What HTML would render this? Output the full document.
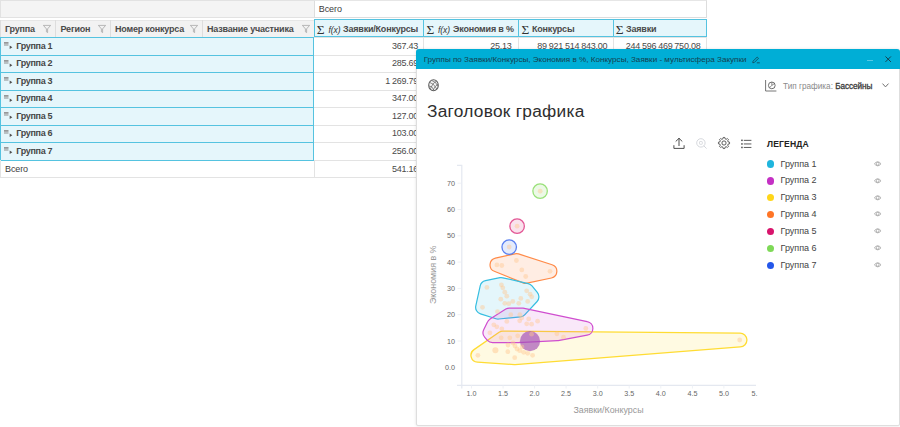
<!DOCTYPE html>
<html lang="ru"><head><meta charset="utf-8"><title>Группы</title>
<style>
*{box-sizing:border-box;margin:0;padding:0}
html,body{width:900px;height:427px;overflow:hidden;background:#fff}
body{position:relative;font-family:"Liberation Sans","DejaVu Sans",sans-serif;font-size:9px;color:#333}
.abs{position:absolute}
.t{position:absolute;white-space:nowrap;line-height:1}
.hb{font-weight:bold;color:#4a4a4a;letter-spacing:-0.2px}
.num{position:absolute;text-align:right;white-space:nowrap;line-height:1;color:#4a4a4a;letter-spacing:-0.25px;word-spacing:-0.3px}
svg{position:absolute;overflow:visible}
</style></head><body>

<div class="abs" style="left:0;top:0;width:314px;height:17.6px;background:#f4f4f4;border:1px solid #e2e2e2;border-right:none"></div>
<div class="abs" style="left:314px;top:0;width:393px;height:17.6px;background:#fff;border:1px solid #dddddd;border-top-color:#e6e6e6"></div>
<div class="t" style="left:318.8px;top:4.8px;color:#3c3c3c;letter-spacing:-0.12px">Всего</div>
<div class="abs" style="left:0;top:19.7px;width:314px;height:17.8px;background:#f2f2f2;border-top:1px solid #e6e6e6"></div>
<div class="abs" style="left:0px;top:20px;width:1px;height:17px;background:#dddddd"></div>
<div class="abs" style="left:55px;top:20px;width:1px;height:17px;background:#dddddd"></div>
<div class="abs" style="left:109.5px;top:20px;width:1px;height:17px;background:#dddddd"></div>
<div class="abs" style="left:202px;top:20px;width:1px;height:17px;background:#dddddd"></div>
<div class="t hb" style="left:5px;top:24.6px">Группа</div>
<svg style="left:43px;top:24.7px" width="8" height="8" viewBox="0 0 8 8"><path d="M0.4 0.4 H7.6 L4.6 3.9 V7.6 L3.4 6.8 V3.9 Z" fill="none" stroke="#a2a2a2" stroke-width="0.75" stroke-linejoin="round"/></svg>
<div class="t hb" style="left:60.5px;top:24.6px">Регион</div>
<svg style="left:97.5px;top:24.7px" width="8" height="8" viewBox="0 0 8 8"><path d="M0.4 0.4 H7.6 L4.6 3.9 V7.6 L3.4 6.8 V3.9 Z" fill="none" stroke="#a2a2a2" stroke-width="0.75" stroke-linejoin="round"/></svg>
<div class="t hb" style="left:115px;top:24.6px">Номер конкурса</div>
<svg style="left:190px;top:24.7px" width="8" height="8" viewBox="0 0 8 8"><path d="M0.4 0.4 H7.6 L4.6 3.9 V7.6 L3.4 6.8 V3.9 Z" fill="none" stroke="#a2a2a2" stroke-width="0.75" stroke-linejoin="round"/></svg>
<div class="t hb" style="left:207px;top:24.6px">Название участника</div>
<svg style="left:301.5px;top:24.7px" width="8" height="8" viewBox="0 0 8 8"><path d="M0.4 0.4 H7.6 L4.6 3.9 V7.6 L3.4 6.8 V3.9 Z" fill="none" stroke="#a2a2a2" stroke-width="0.75" stroke-linejoin="round"/></svg>
<div class="abs" style="left:313.7px;top:18.9px;width:393.3px;height:18.6px;background:#e5f6fb;border:1px solid #55c3e0"></div>
<div class="abs" style="left:423px;top:18.9px;width:1px;height:18.6px;background:#55c3e0"></div>
<div class="abs" style="left:518px;top:18.9px;width:1px;height:18.6px;background:#55c3e0"></div>
<div class="abs" style="left:612.5px;top:18.9px;width:1px;height:18.6px;background:#55c3e0"></div>
<div class="t" style="left:316.8px;top:22.6px;font-family:'Liberation Serif',serif;font-size:13.4px;color:#333">Σ</div>
<div class="t" style="left:328.5px;top:26px;font-style:italic;font-size:8.5px;color:#333;letter-spacing:-0.1px">f(x)</div>
<div class="t hb" style="left:343px;top:24.6px">Заявки/Конкурсы</div>
<div class="t" style="left:426.5px;top:22.6px;font-family:'Liberation Serif',serif;font-size:13.4px;color:#333">Σ</div>
<div class="t" style="left:438px;top:26px;font-style:italic;font-size:8.5px;color:#333;letter-spacing:-0.1px">f(x)</div>
<div class="t hb" style="left:453px;top:24.6px">Экономия в %</div>
<div class="t" style="left:521.5px;top:22.6px;font-family:'Liberation Serif',serif;font-size:13.4px;color:#333">Σ</div>
<div class="t hb" style="left:532px;top:24.6px">Конкурсы</div>
<div class="t" style="left:615.8px;top:22.6px;font-family:'Liberation Serif',serif;font-size:13.4px;color:#333">Σ</div>
<div class="t hb" style="left:626px;top:24.6px">Заявки</div>
<div class="abs" style="left:314px;top:37.0px;width:393px;height:1px;background:#e3e3e3"></div>
<div class="abs" style="left:314px;top:54.5px;width:393px;height:1px;background:#e3e3e3"></div>
<div class="abs" style="left:314px;top:72.0px;width:393px;height:1px;background:#e3e3e3"></div>
<div class="abs" style="left:314px;top:89.5px;width:393px;height:1px;background:#e3e3e3"></div>
<div class="abs" style="left:314px;top:107.0px;width:393px;height:1px;background:#e3e3e3"></div>
<div class="abs" style="left:314px;top:124.5px;width:393px;height:1px;background:#e3e3e3"></div>
<div class="abs" style="left:314px;top:142.0px;width:393px;height:1px;background:#e3e3e3"></div>
<div class="abs" style="left:314px;top:159.5px;width:393px;height:1px;background:#e3e3e3"></div>
<div class="abs" style="left:314px;top:177.0px;width:393px;height:1px;background:#e3e3e3"></div>
<div class="abs" style="left:423px;top:37.5px;width:1px;height:140.0px;background:#e3e3e3"></div>
<div class="abs" style="left:518px;top:37.5px;width:1px;height:140.0px;background:#e3e3e3"></div>
<div class="abs" style="left:612.5px;top:37.5px;width:1px;height:140.0px;background:#e3e3e3"></div>
<div class="abs" style="left:706px;top:37.5px;width:1px;height:140.0px;background:#e3e3e3"></div>
<div class="abs" style="left:0;top:37.0px;width:314px;height:123.5px;background:#e5f6fb;border:1px solid #55c3e0;border-left-width:1.3px"></div>
<div class="abs" style="left:0;top:54.5px;width:314px;height:1px;background:#55c3e0"></div>
<div class="abs" style="left:0;top:72.0px;width:314px;height:1px;background:#55c3e0"></div>
<div class="abs" style="left:0;top:89.5px;width:314px;height:1px;background:#55c3e0"></div>
<div class="abs" style="left:0;top:107.0px;width:314px;height:1px;background:#55c3e0"></div>
<div class="abs" style="left:0;top:124.5px;width:314px;height:1px;background:#55c3e0"></div>
<div class="abs" style="left:0;top:142.0px;width:314px;height:1px;background:#55c3e0"></div>
<svg style="left:4.3px;top:42.3px" width="10" height="8" viewBox="0 0 10 8"><rect x="0" y="0" width="4.5" height="0.9" fill="#8e8e8e"/><rect x="0" y="1.3" width="4.5" height="0.9" fill="#8e8e8e"/><rect x="0" y="2.6" width="4.5" height="0.9" fill="#8e8e8e"/><path d="M5.7 3.5 L8.3 5.2 L5.7 6.9 Z" fill="#4e4e4e"/></svg>
<div class="t hb" style="left:16.3px;top:41.7px;letter-spacing:-0.33px;color:#464646">Группа 1</div>
<div class="num" style="right:482.1px;top:41.7px">367.43</div>
<div class="num" style="right:388.4px;top:41.7px">25.13</div>
<div class="num" style="right:292.79999999999995px;top:41.7px">89 921 514 843.00</div>
<div class="num" style="right:199.60000000000002px;top:41.7px">244 596 469 750.08</div>
<svg style="left:4.3px;top:59.8px" width="10" height="8" viewBox="0 0 10 8"><rect x="0" y="0" width="4.5" height="0.9" fill="#8e8e8e"/><rect x="0" y="1.3" width="4.5" height="0.9" fill="#8e8e8e"/><rect x="0" y="2.6" width="4.5" height="0.9" fill="#8e8e8e"/><path d="M5.7 3.5 L8.3 5.2 L5.7 6.9 Z" fill="#4e4e4e"/></svg>
<div class="t hb" style="left:16.3px;top:59.2px;letter-spacing:-0.33px;color:#464646">Группа 2</div>
<div class="num" style="right:482.1px;top:59.2px">285.69</div>
<div class="num" style="right:388.4px;top:59.2px">21.07</div>
<div class="num" style="right:292.79999999999995px;top:59.2px">64 210 338 120.45</div>
<div class="num" style="right:199.60000000000002px;top:59.2px">181 209 774 310.12</div>
<svg style="left:4.3px;top:77.3px" width="10" height="8" viewBox="0 0 10 8"><rect x="0" y="0" width="4.5" height="0.9" fill="#8e8e8e"/><rect x="0" y="1.3" width="4.5" height="0.9" fill="#8e8e8e"/><rect x="0" y="2.6" width="4.5" height="0.9" fill="#8e8e8e"/><path d="M5.7 3.5 L8.3 5.2 L5.7 6.9 Z" fill="#4e4e4e"/></svg>
<div class="t hb" style="left:16.3px;top:76.7px;letter-spacing:-0.33px;color:#464646">Группа 3</div>
<div class="num" style="right:482.1px;top:76.7px">1 269.79</div>
<div class="num" style="right:388.4px;top:76.7px">9.84</div>
<div class="num" style="right:292.79999999999995px;top:76.7px">310 442 905 611.30</div>
<div class="num" style="right:199.60000000000002px;top:76.7px">402 118 530 992.76</div>
<svg style="left:4.3px;top:94.8px" width="10" height="8" viewBox="0 0 10 8"><rect x="0" y="0" width="4.5" height="0.9" fill="#8e8e8e"/><rect x="0" y="1.3" width="4.5" height="0.9" fill="#8e8e8e"/><rect x="0" y="2.6" width="4.5" height="0.9" fill="#8e8e8e"/><path d="M5.7 3.5 L8.3 5.2 L5.7 6.9 Z" fill="#4e4e4e"/></svg>
<div class="t hb" style="left:16.3px;top:94.2px;letter-spacing:-0.33px;color:#464646">Группа 4</div>
<div class="num" style="right:482.1px;top:94.2px">347.00</div>
<div class="num" style="right:388.4px;top:94.2px">38.52</div>
<div class="num" style="right:292.79999999999995px;top:94.2px">72 008 116 450.00</div>
<div class="num" style="right:199.60000000000002px;top:94.2px">150 730 284 615.40</div>
<svg style="left:4.3px;top:112.3px" width="10" height="8" viewBox="0 0 10 8"><rect x="0" y="0" width="4.5" height="0.9" fill="#8e8e8e"/><rect x="0" y="1.3" width="4.5" height="0.9" fill="#8e8e8e"/><rect x="0" y="2.6" width="4.5" height="0.9" fill="#8e8e8e"/><path d="M5.7 3.5 L8.3 5.2 L5.7 6.9 Z" fill="#4e4e4e"/></svg>
<div class="t hb" style="left:16.3px;top:111.7px;letter-spacing:-0.33px;color:#464646">Группа 5</div>
<div class="num" style="right:482.1px;top:111.7px">127.00</div>
<div class="num" style="right:388.4px;top:111.7px">53.10</div>
<div class="num" style="right:292.79999999999995px;top:111.7px">12 450 300 000.00</div>
<div class="num" style="right:199.60000000000002px;top:111.7px">21 804 512 300.00</div>
<svg style="left:4.3px;top:129.8px" width="10" height="8" viewBox="0 0 10 8"><rect x="0" y="0" width="4.5" height="0.9" fill="#8e8e8e"/><rect x="0" y="1.3" width="4.5" height="0.9" fill="#8e8e8e"/><rect x="0" y="2.6" width="4.5" height="0.9" fill="#8e8e8e"/><path d="M5.7 3.5 L8.3 5.2 L5.7 6.9 Z" fill="#4e4e4e"/></svg>
<div class="t hb" style="left:16.3px;top:129.2px;letter-spacing:-0.33px;color:#464646">Группа 6</div>
<div class="num" style="right:482.1px;top:129.2px">103.00</div>
<div class="num" style="right:388.4px;top:129.2px">67.25</div>
<div class="num" style="right:292.79999999999995px;top:129.2px">9 120 640 000.00</div>
<div class="num" style="right:199.60000000000002px;top:129.2px">19 502 118 700.00</div>
<svg style="left:4.3px;top:147.3px" width="10" height="8" viewBox="0 0 10 8"><rect x="0" y="0" width="4.5" height="0.9" fill="#8e8e8e"/><rect x="0" y="1.3" width="4.5" height="0.9" fill="#8e8e8e"/><rect x="0" y="2.6" width="4.5" height="0.9" fill="#8e8e8e"/><path d="M5.7 3.5 L8.3 5.2 L5.7 6.9 Z" fill="#4e4e4e"/></svg>
<div class="t hb" style="left:16.3px;top:146.7px;letter-spacing:-0.33px;color:#464646">Группа 7</div>
<div class="num" style="right:482.1px;top:146.7px">256.00</div>
<div class="num" style="right:388.4px;top:146.7px">45.60</div>
<div class="num" style="right:292.79999999999995px;top:146.7px">31 770 215 900.00</div>
<div class="num" style="right:199.60000000000002px;top:146.7px">50 843 006 120.00</div>
<div class="abs" style="left:0;top:177.0px;width:314px;height:1px;background:#e3e3e3"></div>
<div class="abs" style="left:0;top:160.0px;width:1px;height:17.5px;background:#e3e3e3"></div>
<div class="abs" style="left:313.5px;top:160.0px;width:1px;height:17.5px;background:#e3e3e3"></div>
<div class="t" style="left:5px;top:165.1px;color:#3c3c3c;letter-spacing:-0.12px">Всего</div>
<div class="num" style="right:482.1px;top:165.1px">541.16</div>
<div class="num" style="right:388.4px;top:165.1px">17.92</div>
<div class="num" style="right:292.79999999999995px;top:165.1px">589 924 030 924.75</div>
<div class="num" style="right:199.60000000000002px;top:165.1px">1 070 804 696 788.48</div>
<div class="abs" style="left:416px;top:48.7px;width:483.5px;height:377.2px;background:#fff;border:1px solid #dedede;border-radius:3px 3px 2px 2px;box-shadow:0 0 3px rgba(0,0,0,.13)"></div>
<div class="abs" style="left:416px;top:48.7px;width:483.5px;height:19.9px;border-radius:3px 3px 0 0;background:#00aed6"></div>
<div class="t" style="left:423.7px;top:55.9px;font-size:8.12px;color:#15414f">Группы по Заявки/Конкурсы, Экономия в %, Конкурсы, Заявки - мультисфера Закупки</div>
<svg style="left:752px;top:55.6px" width="8.4" height="7.4" viewBox="0 0 9 8"><path d="M1.1 5.6 L5.6 1.1 L7 2.5 L2.5 7 L0.8 7.3 Z M5.2 7.4 H8.4" fill="none" stroke="#15414f" stroke-width="0.85" stroke-linejoin="round"/></svg>
<div class="abs" style="left:867px;top:60.4px;width:6px;height:1px;background:#55c9e5"></div>
<svg style="left:885px;top:55.6px" width="6.4" height="6.4" viewBox="0 0 6.4 6.4"><path d="M0.5 0.5 L5.9 5.9 M5.9 0.5 L0.5 5.9" stroke="#15414f" stroke-width="1" fill="none"/></svg>
<svg style="left:427.9px;top:79.2px" width="11" height="12.4" viewBox="0 0 11 12.4"><ellipse cx="5.5" cy="6.2" rx="4.8" ry="5.5" fill="#f4f4f4" stroke="#5e5e5e" stroke-width="1.05"/><path d="M1.6 3.4 Q5.6 4 8.8 10 M3.6 1.4 Q8.2 2.6 10 7.4 M0.9 7 Q4 6.4 6 11.4 M2.4 9.8 Q4.6 3.6 8.6 2 M5 11.2 Q7 6.8 10 5.2" fill="none" stroke="#686868" stroke-width="0.75"/></svg>
<svg style="left:765.4px;top:79.8px" width="12" height="12" viewBox="0 0 12 12"><path d="M0.6 0 V11 H11.4" fill="none" stroke="#666" stroke-width="0.9"/><circle cx="6.8" cy="5.4" r="3.35" fill="none" stroke="#555" stroke-width="0.85"/><path d="M6.8 5.4 V2.2 M6.8 5.4 L9.4 3.6 M6.8 5.4 L4.6 7.6" stroke="#555" stroke-width="0.65"/></svg>
<div class="t" style="left:783px;top:82.9px;font-size:8.2px;color:#8a8a8a">Тип графика: <span style="color:#3a3a3a;-webkit-text-stroke:0.3px #3a3a3a;letter-spacing:-0.08px">Бассейны</span></div>
<svg style="left:881.6px;top:83.2px" width="7" height="5" viewBox="0 0 7 5"><path d="M0.5 0.6 L3.5 3.9 L6.5 0.6" fill="none" stroke="#707070" stroke-width="1"/></svg>
<div class="t" style="left:427px;top:102.5px;font-size:17.3px;letter-spacing:0.27px;color:#2e2e2e">Заголовок графика</div>
<svg style="left:673px;top:137px" width="12" height="13" viewBox="0 0 12 13"><path d="M6 8.6 V1.4 M3 4.2 L6 1.3 L9 4.2 M0.9 8.6 V11.4 H11.1 V8.6" fill="none" stroke="#444" stroke-width="0.95" stroke-linecap="round" stroke-linejoin="round"/></svg>
<svg style="left:696px;top:138.3px" width="11" height="11" viewBox="0 0 11 11"><circle cx="4.9" cy="4.9" r="4.2" fill="none" stroke="#d0d3d8" stroke-width="0.9"/><rect x="3.5" y="3.5" width="2.8" height="2.8" rx="0.6" fill="none" stroke="#d0d3d8" stroke-width="0.8"/><path d="M7.9 7.9 L10.6 10.6" stroke="#d0d3d8" stroke-width="0.9"/></svg>
<svg style="left:717.7px;top:137.4px" width="12" height="12" viewBox="0 0 12 12"><path d="M5.22 0.45 L6.78 0.45 L7.02 1.77 L8.27 2.29 L9.37 1.53 L10.47 2.63 L9.71 3.73 L10.23 4.98 L11.55 5.22 L11.55 6.78 L10.23 7.02 L9.71 8.27 L10.47 9.37 L9.37 10.47 L8.27 9.71 L7.02 10.23 L6.78 11.55 L5.22 11.55 L4.98 10.23 L3.73 9.71 L2.63 10.47 L1.53 9.37 L2.29 8.27 L1.77 7.02 L0.45 6.78 L0.45 5.22 L1.77 4.98 L2.29 3.73 L1.53 2.63 L2.63 1.53 L3.73 2.29 L4.98 1.77 Z" fill="none" stroke="#4a4a4a" stroke-width="0.9" stroke-linejoin="round"/><circle cx="6" cy="6" r="2.1" fill="none" stroke="#4a4a4a" stroke-width="0.9"/></svg>
<svg style="left:741px;top:139px" width="11" height="10" viewBox="0 0 11 10"><path d="M2.8 1.35 H10.4 M2.8 4.95 H10.4 M2.8 8.45 H10.4" stroke="#4a4a4a" stroke-width="0.9"/><rect x="0.2" y="0.6" width="1.5" height="1.5" fill="#4a4a4a"/><rect x="0.2" y="4.2" width="1.5" height="1.5" fill="#4a4a4a"/><rect x="0.2" y="7.7" width="1.5" height="1.5" fill="#4a4a4a"/></svg>
<div class="t" style="left:767px;top:140.4px;font-size:8.6px;font-weight:bold;color:#222;letter-spacing:0.13px">ЛЕГЕНДА</div>
<div class="abs" style="left:767px;top:160.4px;width:7.4px;height:7.4px;border-radius:50%;background:#1fb5dd"></div>
<div class="t" style="left:780.6px;top:159.5px;font-size:9px;color:#444">Группа 1</div>
<svg style="left:873.8px;top:160.9px" width="7.4" height="5.6" viewBox="0 0 7.4 5.6"><path d="M0.35 2.8 Q3.7 -1.3 7.05 2.8 Q3.7 6.9 0.35 2.8 Z" fill="none" stroke="#929292" stroke-width="0.65"/><circle cx="3.7" cy="2.8" r="1.45" fill="none" stroke="#929292" stroke-width="0.65"/></svg>
<div class="abs" style="left:767px;top:177.25px;width:7.4px;height:7.4px;border-radius:50%;background:#c430c4"></div>
<div class="t" style="left:780.6px;top:176.35px;font-size:9px;color:#444">Группа 2</div>
<svg style="left:873.8px;top:177.75px" width="7.4" height="5.6" viewBox="0 0 7.4 5.6"><path d="M0.35 2.8 Q3.7 -1.3 7.05 2.8 Q3.7 6.9 0.35 2.8 Z" fill="none" stroke="#929292" stroke-width="0.65"/><circle cx="3.7" cy="2.8" r="1.45" fill="none" stroke="#929292" stroke-width="0.65"/></svg>
<div class="abs" style="left:767px;top:194.10000000000002px;width:7.4px;height:7.4px;border-radius:50%;background:#ffd619"></div>
<div class="t" style="left:780.6px;top:193.20000000000002px;font-size:9px;color:#444">Группа 3</div>
<svg style="left:873.8px;top:194.60000000000002px" width="7.4" height="5.6" viewBox="0 0 7.4 5.6"><path d="M0.35 2.8 Q3.7 -1.3 7.05 2.8 Q3.7 6.9 0.35 2.8 Z" fill="none" stroke="#929292" stroke-width="0.65"/><circle cx="3.7" cy="2.8" r="1.45" fill="none" stroke="#929292" stroke-width="0.65"/></svg>
<div class="abs" style="left:767px;top:210.95000000000002px;width:7.4px;height:7.4px;border-radius:50%;background:#ff7526"></div>
<div class="t" style="left:780.6px;top:210.05px;font-size:9px;color:#444">Группа 4</div>
<svg style="left:873.8px;top:211.45000000000002px" width="7.4" height="5.6" viewBox="0 0 7.4 5.6"><path d="M0.35 2.8 Q3.7 -1.3 7.05 2.8 Q3.7 6.9 0.35 2.8 Z" fill="none" stroke="#929292" stroke-width="0.65"/><circle cx="3.7" cy="2.8" r="1.45" fill="none" stroke="#929292" stroke-width="0.65"/></svg>
<div class="abs" style="left:767px;top:227.8px;width:7.4px;height:7.4px;border-radius:50%;background:#d8146c"></div>
<div class="t" style="left:780.6px;top:226.9px;font-size:9px;color:#444">Группа 5</div>
<svg style="left:873.8px;top:228.3px" width="7.4" height="5.6" viewBox="0 0 7.4 5.6"><path d="M0.35 2.8 Q3.7 -1.3 7.05 2.8 Q3.7 6.9 0.35 2.8 Z" fill="none" stroke="#929292" stroke-width="0.65"/><circle cx="3.7" cy="2.8" r="1.45" fill="none" stroke="#929292" stroke-width="0.65"/></svg>
<div class="abs" style="left:767px;top:244.65px;width:7.4px;height:7.4px;border-radius:50%;background:#7ed957"></div>
<div class="t" style="left:780.6px;top:243.75px;font-size:9px;color:#444">Группа 6</div>
<svg style="left:873.8px;top:245.15px" width="7.4" height="5.6" viewBox="0 0 7.4 5.6"><path d="M0.35 2.8 Q3.7 -1.3 7.05 2.8 Q3.7 6.9 0.35 2.8 Z" fill="none" stroke="#929292" stroke-width="0.65"/><circle cx="3.7" cy="2.8" r="1.45" fill="none" stroke="#929292" stroke-width="0.65"/></svg>
<div class="abs" style="left:767px;top:261.5px;width:7.4px;height:7.4px;border-radius:50%;background:#2457ea"></div>
<div class="t" style="left:780.6px;top:260.59999999999997px;font-size:9px;color:#444">Группа 7</div>
<svg style="left:873.8px;top:262.0px" width="7.4" height="5.6" viewBox="0 0 7.4 5.6"><path d="M0.35 2.8 Q3.7 -1.3 7.05 2.8 Q3.7 6.9 0.35 2.8 Z" fill="none" stroke="#929292" stroke-width="0.65"/><circle cx="3.7" cy="2.8" r="1.45" fill="none" stroke="#929292" stroke-width="0.65"/></svg>
<svg style="left:0;top:0" width="900" height="427" viewBox="0 0 900 427">
<path d="M457 165.3 H461.8 V388.6 M457 385.3 H756" fill="none" stroke="#e4e8f0" stroke-width="1.2"/>
<path d="M457.5 341.0 H461" stroke="#eef1f6" stroke-width="1"/>
<path d="M457.5 314.7 H461" stroke="#eef1f6" stroke-width="1"/>
<path d="M457.5 288.4 H461" stroke="#eef1f6" stroke-width="1"/>
<path d="M457.5 262.1 H461" stroke="#eef1f6" stroke-width="1"/>
<path d="M457.5 235.8 H461" stroke="#eef1f6" stroke-width="1"/>
<path d="M457.5 209.5 H461" stroke="#eef1f6" stroke-width="1"/>
<path d="M457.5 183.2 H461" stroke="#eef1f6" stroke-width="1"/>
<path d="M471.5 385.5 V388.5" stroke="#eef1f6" stroke-width="1"/>
<path d="M503.1 385.5 V388.5" stroke="#eef1f6" stroke-width="1"/>
<path d="M534.6 385.5 V388.5" stroke="#eef1f6" stroke-width="1"/>
<path d="M566.1 385.5 V388.5" stroke="#eef1f6" stroke-width="1"/>
<path d="M597.7 385.5 V388.5" stroke="#eef1f6" stroke-width="1"/>
<path d="M629.2 385.5 V388.5" stroke="#eef1f6" stroke-width="1"/>
<path d="M660.8 385.5 V388.5" stroke="#eef1f6" stroke-width="1"/>
<path d="M692.4 385.5 V388.5" stroke="#eef1f6" stroke-width="1"/>
<path d="M723.9 385.5 V388.5" stroke="#eef1f6" stroke-width="1"/>
<text x="455" y="369.9" font-size="7.2" fill="#666" text-anchor="end">0.0</text>
<text x="455" y="343.6" font-size="7.2" fill="#666" text-anchor="end">10</text>
<text x="455" y="317.3" font-size="7.2" fill="#666" text-anchor="end">20</text>
<text x="455" y="291.0" font-size="7.2" fill="#666" text-anchor="end">30</text>
<text x="455" y="264.7" font-size="7.2" fill="#666" text-anchor="end">40</text>
<text x="455" y="238.4" font-size="7.2" fill="#666" text-anchor="end">50</text>
<text x="455" y="212.1" font-size="7.2" fill="#666" text-anchor="end">60</text>
<text x="455" y="185.8" font-size="7.2" fill="#666" text-anchor="end">70</text>
<text x="471.5" y="396.1" font-size="7.2" fill="#666" text-anchor="middle">1.0</text>
<text x="503.1" y="396.1" font-size="7.2" fill="#666" text-anchor="middle">1.5</text>
<text x="534.6" y="396.1" font-size="7.2" fill="#666" text-anchor="middle">2.0</text>
<text x="566.1" y="396.1" font-size="7.2" fill="#666" text-anchor="middle">2.5</text>
<text x="597.7" y="396.1" font-size="7.2" fill="#666" text-anchor="middle">3.0</text>
<text x="629.2" y="396.1" font-size="7.2" fill="#666" text-anchor="middle">3.5</text>
<text x="660.8" y="396.1" font-size="7.2" fill="#666" text-anchor="middle">4.0</text>
<text x="692.4" y="396.1" font-size="7.2" fill="#666" text-anchor="middle">4.5</text>
<text x="723.9" y="396.1" font-size="7.2" fill="#666" text-anchor="middle">5.0</text>
<text x="751.5" y="396.1" font-size="7.2" fill="#666">5.</text>
<text x="608.5" y="412.9" font-size="8.9" fill="#999" text-anchor="middle">Заявки/Конкурсы</text>
<text transform="translate(435.9,274.8) rotate(-90)" font-size="8.9" fill="#999" text-anchor="middle">Экономия в %</text>
<path d="M477.5 362.2 A6.9 6.9 0 0 1 474.0 349.6 L499.1 332.3 A6.9 6.9 0 0 1 503.1 331.1 L739.8 333.1 A6.9 6.9 0 0 1 740.2 346.9 L515.2 364.6 A6.9 6.9 0 0 1 514.3 364.6 Z" fill="#ffe14d" fill-opacity="0.16" stroke="#ffdc33" stroke-width="1.3"/>
<path d="M494.3 271.3 A6.9 6.9 0 0 1 495.4 258.2 L514.9 253.8 A6.9 6.9 0 0 1 518.5 253.9 L552.1 264.7 A6.9 6.9 0 0 1 551.4 278.0 L527.1 283.2 A6.9 6.9 0 0 1 523.1 282.9 Z" fill="#ff7526" fill-opacity="0.13" stroke="#ff8a48" stroke-width="1.2"/>
<path d="M480.2 285.9 A6.9 6.9 0 0 1 485.5 280.6 L500.0 277.7 A6.9 6.9 0 0 1 502.9 277.8 L528.2 283.6 A6.9 6.9 0 0 1 532.0 285.9 L537.3 292.4 A6.9 6.9 0 0 1 537.1 301.5 L524.9 314.7 A6.9 6.9 0 0 1 520.5 316.9 L498.7 319.0 A6.9 6.9 0 0 1 496.0 318.7 L480.5 313.9 A6.9 6.9 0 0 1 475.8 305.8 Z" fill="#1fb5dd" fill-opacity="0.12" stroke="#36bee1" stroke-width="1.2"/>
<path d="M484.8 337.4 A6.9 6.9 0 0 1 483.7 329.8 L487.6 321.8 A6.9 6.9 0 0 1 490.1 318.9 L505.8 309.1 A6.9 6.9 0 0 1 509.5 308.1 L521.7 308.1 A6.9 6.9 0 0 1 523.1 308.2 L587.2 321.6 A6.9 6.9 0 0 1 587.1 335.2 L558.2 340.6 A6.9 6.9 0 0 1 557.3 340.7 L518.4 342.7 A6.9 6.9 0 0 1 518.0 342.7 L492.5 342.6 A6.9 6.9 0 0 1 487.4 340.3 Z" fill="#c430c4" fill-opacity="0.11" stroke="#cf4dcf" stroke-width="1.2"/>
<circle cx="509.2" cy="247.1" r="7.25" fill="#2457ea" fill-opacity="0.12" stroke="#4a73ee" stroke-width="1.3" stroke-opacity="0.9"/>
<circle cx="517.1" cy="226.2" r="7.25" fill="#d8146c" fill-opacity="0.12" stroke="#e0458a" stroke-width="1.3" stroke-opacity="0.9"/>
<circle cx="540.1" cy="191.1" r="7.25" fill="#7ed957" fill-opacity="0.15" stroke="#8fde6c" stroke-width="1.3" stroke-opacity="0.9"/>
<circle cx="530" cy="341.2" r="10.1" fill="#a352b5" fill-opacity="0.68"/>
<circle cx="509.2" cy="247.0" r="2.4" fill="#ffc890" fill-opacity="0.45"/>
<circle cx="517.1" cy="226.2" r="2.4" fill="#ffc890" fill-opacity="0.45"/>
<circle cx="540.2" cy="191.2" r="2.4" fill="#ffc890" fill-opacity="0.45"/>
<circle cx="496.9" cy="264.9" r="2.4" fill="#ffc890" fill-opacity="0.45"/>
<circle cx="501.8" cy="265.5" r="2.4" fill="#ffc890" fill-opacity="0.45"/>
<circle cx="516.4" cy="260.5" r="2.4" fill="#ffc890" fill-opacity="0.45"/>
<circle cx="521.8" cy="269.9" r="2.4" fill="#ffc890" fill-opacity="0.45"/>
<circle cx="525.7" cy="276.5" r="2.4" fill="#ffc890" fill-opacity="0.45"/>
<circle cx="550.0" cy="271.3" r="2.4" fill="#ffc890" fill-opacity="0.45"/>
<circle cx="486.9" cy="287.4" r="2.4" fill="#ffc890" fill-opacity="0.45"/>
<circle cx="482.5" cy="307.3" r="2.4" fill="#ffc890" fill-opacity="0.45"/>
<circle cx="501.4" cy="284.8" r="2.4" fill="#ffc890" fill-opacity="0.45"/>
<circle cx="502.8" cy="287.8" r="2.4" fill="#ffc890" fill-opacity="0.45"/>
<circle cx="504.8" cy="292.2" r="2.4" fill="#ffc890" fill-opacity="0.45"/>
<circle cx="506.8" cy="296.2" r="2.4" fill="#ffc890" fill-opacity="0.45"/>
<circle cx="500.8" cy="299.2" r="2.4" fill="#ffc890" fill-opacity="0.45"/>
<circle cx="504.8" cy="303.3" r="2.4" fill="#ffc890" fill-opacity="0.45"/>
<circle cx="508.8" cy="303.7" r="2.4" fill="#ffc890" fill-opacity="0.45"/>
<circle cx="512.8" cy="301.4" r="2.4" fill="#ffc890" fill-opacity="0.45"/>
<circle cx="520.8" cy="298.4" r="2.4" fill="#ffc890" fill-opacity="0.45"/>
<circle cx="518.8" cy="303.3" r="2.4" fill="#ffc890" fill-opacity="0.45"/>
<circle cx="527.7" cy="301.4" r="2.4" fill="#ffc890" fill-opacity="0.45"/>
<circle cx="526.7" cy="290.8" r="2.4" fill="#ffc890" fill-opacity="0.45"/>
<circle cx="530.1" cy="294.2" r="2.4" fill="#ffc890" fill-opacity="0.45"/>
<circle cx="531.7" cy="296.8" r="2.4" fill="#ffc890" fill-opacity="0.45"/>
<circle cx="497.5" cy="311.7" r="2.4" fill="#ffc890" fill-opacity="0.45"/>
<circle cx="510.8" cy="314.7" r="2.4" fill="#ffc890" fill-opacity="0.45"/>
<circle cx="519.8" cy="314.7" r="2.4" fill="#ffc890" fill-opacity="0.45"/>
<circle cx="489.9" cy="332.8" r="2.4" fill="#ffc890" fill-opacity="0.45"/>
<circle cx="493.8" cy="324.8" r="2.4" fill="#ffc890" fill-opacity="0.45"/>
<circle cx="496.8" cy="326.8" r="2.4" fill="#ffc890" fill-opacity="0.45"/>
<circle cx="501.8" cy="328.8" r="2.4" fill="#ffc890" fill-opacity="0.45"/>
<circle cx="501.2" cy="337.8" r="2.4" fill="#ffc890" fill-opacity="0.45"/>
<circle cx="509.8" cy="337.8" r="2.4" fill="#ffc890" fill-opacity="0.45"/>
<circle cx="506.8" cy="321.4" r="2.4" fill="#ffc890" fill-opacity="0.45"/>
<circle cx="519.7" cy="320.8" r="2.4" fill="#ffc890" fill-opacity="0.45"/>
<circle cx="521.7" cy="317.9" r="2.4" fill="#ffc890" fill-opacity="0.45"/>
<circle cx="528.7" cy="318.9" r="2.4" fill="#ffc890" fill-opacity="0.45"/>
<circle cx="526.7" cy="323.8" r="2.4" fill="#ffc890" fill-opacity="0.45"/>
<circle cx="531.6" cy="324.2" r="2.4" fill="#ffc890" fill-opacity="0.45"/>
<circle cx="537.6" cy="321.2" r="2.4" fill="#ffc890" fill-opacity="0.45"/>
<circle cx="556.9" cy="333.8" r="2.4" fill="#ffc890" fill-opacity="0.45"/>
<circle cx="563.5" cy="337.2" r="2.4" fill="#ffc890" fill-opacity="0.45"/>
<circle cx="585.8" cy="328.4" r="2.4" fill="#ffc890" fill-opacity="0.45"/>
<circle cx="531.6" cy="334.2" r="2.4" fill="#ffc890" fill-opacity="0.45"/>
<circle cx="517.7" cy="335.8" r="2.4" fill="#ffc890" fill-opacity="0.45"/>
<circle cx="513.0" cy="343.0" r="2.4" fill="#ffc890" fill-opacity="0.45"/>
<circle cx="508.0" cy="345.0" r="2.4" fill="#ffc890" fill-opacity="0.45"/>
<circle cx="515.0" cy="346.0" r="2.4" fill="#ffc890" fill-opacity="0.45"/>
<circle cx="477.9" cy="355.3" r="2.4" fill="#ffc890" fill-opacity="0.45"/>
<circle cx="507.8" cy="351.7" r="2.4" fill="#ffc890" fill-opacity="0.45"/>
<circle cx="514.7" cy="357.7" r="2.4" fill="#ffc890" fill-opacity="0.45"/>
<circle cx="532.6" cy="355.3" r="2.4" fill="#ffc890" fill-opacity="0.45"/>
<circle cx="519.7" cy="350.7" r="2.4" fill="#ffc890" fill-opacity="0.45"/>
<circle cx="523.7" cy="352.3" r="2.4" fill="#ffc890" fill-opacity="0.45"/>
<circle cx="527.7" cy="353.3" r="2.4" fill="#ffc890" fill-opacity="0.45"/>
<circle cx="517.0" cy="349.0" r="2.4" fill="#ffc890" fill-opacity="0.45"/>
<circle cx="522.0" cy="347.0" r="2.4" fill="#ffc890" fill-opacity="0.45"/>
<circle cx="739.7" cy="340.0" r="2.4" fill="#ffc890" fill-opacity="0.45"/>
<circle cx="495.4" cy="350.3" r="3.0" fill="#ffc890" fill-opacity="0.5"/>
</svg>
</body></html>
